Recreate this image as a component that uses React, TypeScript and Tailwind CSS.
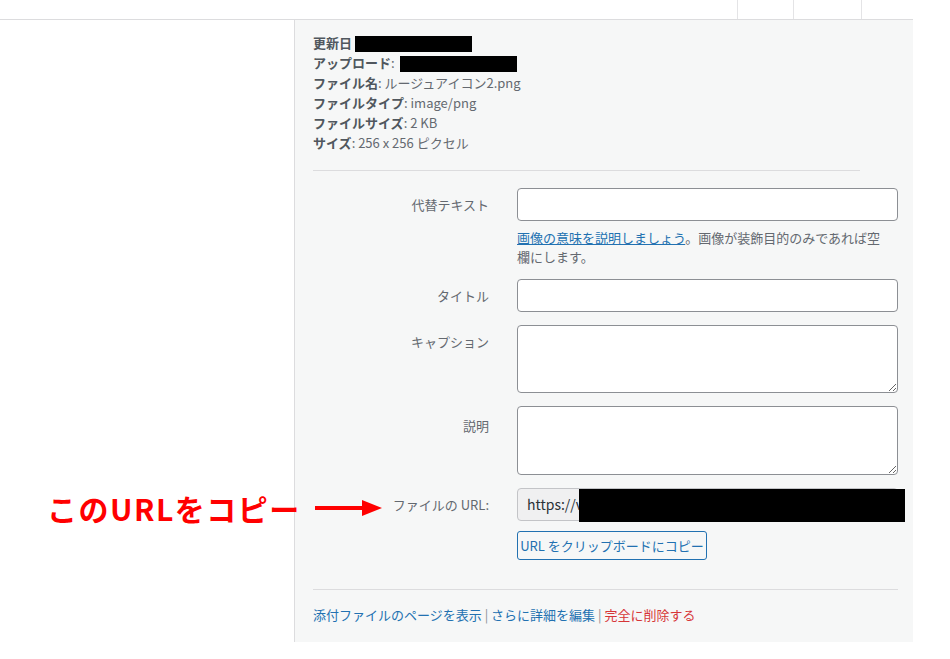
import React from "react";

const font = { fontFamily: '"Noto Sans CJK JP", "Noto Sans", sans-serif' };

function Row({ label, children, labelPt = "pt-[7px]" }: { label: string; children: React.ReactNode; labelPt?: string }) {
  return (
    <div className="flex">
      <div className={`w-[176px] shrink-0 text-right text-[13px] leading-[20px] text-[#646970] ${labelPt}`}>{label}</div>
      <div className="ml-[28px] w-[381px]">{children}</div>
    </div>
  );
}

export default function App() {
  return (
    <div className="relative w-[950px] h-[659px] bg-white overflow-hidden text-[#3c434a]" style={font}>
      {/* header */}
      <div className="flex h-[20px] w-[913px] border-b border-[#dcdcde] bg-white">
        <div className="flex-1" />
        <div className="w-[56px] border-l border-[#e4e4e6]" />
        <div className="w-[68px] border-l border-[#e4e4e6]" />
        <div className="w-[52px] border-l border-[#e4e4e6]" />
      </div>

      <div className="flex">
        <div className="w-[294px] shrink-0" />
        <div className="w-[619px] h-[622px] border-l border-[#dcdcde] bg-[#f6f7f7] pl-[18px] pt-[13px]">
          {/* info */}
          <div className="text-[13px] leading-[20px] text-[#646970]">
            <div>
              <span className="font-bold text-[#50575e]">更新日</span>
              <span className="inline-block align-middle w-[117px] h-[16px] bg-black ml-[3px]" />
            </div>
            <div>
              <span className="font-bold text-[#50575e]">アップロード</span>: <span className="inline-block align-middle w-[117px] h-[16px] bg-black ml-[2px]" />
            </div>
            <div>
              <span className="font-bold text-[#50575e]">ファイル名</span>: ルージュアイコン2.png
            </div>
            <div>
              <span className="font-bold text-[#50575e]">ファイルタイプ</span>: image/png
            </div>
            <div>
              <span className="font-bold text-[#50575e]">ファイルサイズ</span>: 2 KB
            </div>
            <div>
              <span className="font-bold text-[#50575e]">サイズ</span>: 256 x 256 ピクセル
            </div>
          </div>

          <div className="mt-[17px] w-[547px] border-t border-[#dcdcde]" />

          <div className="mt-[17px] flex flex-col gap-[13px]">
            <div>
              <Row label="代替テキスト">
                <input readOnly className="block w-full h-[33px] rounded-[4px] border border-[#8c8f94] bg-white" />
                <p className="mt-[7px] w-[372px] text-[13px] leading-[19px] text-[#646970]">
                  <a className="text-[#2271b1] underline">画像の意味を説明しましょう</a>。画像が装飾目的のみであれば空欄にします。
                </p>
              </Row>
            </div>
            <Row label="タイトル">
              <input readOnly className="block w-full h-[33px] rounded-[4px] border border-[#8c8f94] bg-white" />
            </Row>
            <Row label="キャプション">
              <textarea readOnly className="block w-full h-[68px] rounded-[4px] border border-[#8c8f94] bg-white" />
            </Row>
            <Row label="説明" labelPt="pt-[10px]">
              <textarea readOnly className="block w-full h-[69px] rounded-[4px] border border-[#8c8f94] bg-white" />
            </Row>
            <Row label="ファイルの URL:">
              <div className="relative">
                <div className="w-full h-[33px] rounded-[4px] border border-[#c3c4c7] bg-[#f0f0f1] pl-[9px] text-[14px] leading-[31px] text-[#2c3338]">https://v</div>
                <div className="absolute left-[62px] top-[1px] w-[326px] h-[33px] bg-black" />
              </div>
              <button className="mt-[10px] h-[29px] w-[190px] rounded-[3px] border border-[#2271b1] bg-[#f6f7f7] text-[13px] text-[#2271b1]">
                URL をクリップボードにコピー
              </button>
            </Row>
          </div>

          <div className="mt-[29px] w-[585px] border-t border-[#dcdcde]" />

          <div className="mt-[15px] text-[13px] leading-[20px] text-[#8c8f94]">
            <span className="text-[#2271b1]">添付ファイルのページを表示</span> | <span className="text-[#2271b1]">さらに詳細を編集</span> | <span className="text-[#d63638]">完全に削除する</span>
          </div>
        </div>
      </div>

      {/* annotation */}
      <div className="absolute left-[47px] top-[489px] flex items-center">
        <span className="text-[30px] leading-[38px] font-bold text-[#ff0000] tracking-[1.5px]">このURLをコピー</span>
      </div>
      <svg className="absolute left-[314px] top-[499px]" width="70" height="18" viewBox="0 0 70 18">
        <rect x="1" y="7" width="50" height="4" fill="#ff0000" />
        <polygon points="48,1 68,9 48,17" fill="#ff0000" />
      </svg>
    </div>
  );
}
